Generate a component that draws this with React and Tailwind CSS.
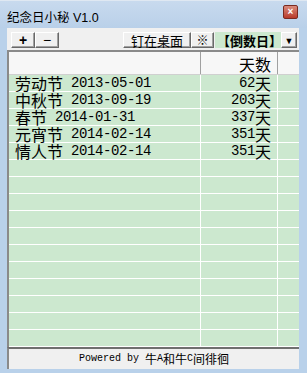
import React from "react";

const rows = [
  ["劳动节", "2013-05-01", "62"],
  ["中秋节", "2013-09-19", "203"],
  ["春节", "2014-01-31", "337"],
  ["元宵节", "2014-02-14", "351"],
  ["情人节", "2014-02-14", "351"],
];

const cjk = { fontFamily: '"Noto Sans CJK SC", sans-serif' };
const mono = { fontFamily: '"Liberation Mono", monospace' };

function Btn({ className = "", children }) {
  return (
    <div
      className={
        "flex items-center justify-center h-[16px] bg-[#f0f0f0] border-t border-l border-white border-r border-b border-r-[#696969] border-b-[#696969] shadow-[inset_-1px_-1px_0_#a0a0a0] " +
        className
      }
    >
      {children}
    </div>
  );
}

export default function App() {
  const blanks = Array.from({ length: 11 });
  return (
    <div className="w-[307px] h-[373px] bg-[#b9d1ea] flex flex-col overflow-hidden border-t border-[#dfe8f2]">
      <div className="h-[27px] flex items-center pl-[7px] pr-[9px] bg-gradient-to-b from-[#c8daee] to-[#b9d0e9]">
        <span
          className="text-[12.5px] text-black leading-[14px] mt-[6px]"
          style={{ fontFamily: '"Liberation Sans", "Noto Sans CJK SC", sans-serif' }}
        >
          纪念日小秘 V1.0
        </span>
        <div
          className="ml-auto mt-[-6px] w-[15px] h-[14px] rounded-[2px] bg-gradient-to-b from-[#d98a7c] to-[#b8392a] border border-[#7a2a20] flex items-center justify-center text-white text-[10px] font-bold leading-none"
          style={{ fontFamily: '"Liberation Sans", sans-serif' }}
        >
          ×
        </div>
      </div>
      <div className="ml-[7px] mr-[8px] h-[341px] bg-[#f0f0f0] flex flex-col">
        <div className="h-[22px] flex items-start pt-[4px] pl-[4px] pr-[2px]">
          <Btn className="w-[24px] text-[14px] font-bold leading-none">
            <span style={{ fontFamily: '"Liberation Sans", sans-serif' }}>+</span>
          </Btn>
          <Btn className="w-[24px] text-[14px] leading-none">
            <span style={{ fontFamily: '"Liberation Sans", sans-serif' }}>−</span>
          </Btn>
          <Btn className="ml-[64px] w-[68px] text-[13px] leading-none">
            <span style={cjk}>钉在桌面</span>
          </Btn>
          <Btn className="w-[23px] text-[12px] leading-none">
            <span style={cjk}>※</span>
          </Btn>
          <div className="ml-[1px] h-[16px] flex-1 flex bg-[#cce8cf] items-center">
            <span className="flex-1 text-[13px] font-bold leading-none pl-[2px]" style={cjk}>
              【倒数日】
            </span>
            <Btn className="w-[16px] text-[9px] leading-none">
              <span>▼</span>
            </Btn>
          </div>
        </div>
        <div className="h-[297px] flex flex-col border-t-2 border-l-2 border-t-[#8a8a8a] border-l-[#8a8a8a] bg-[#cce8cf] overflow-hidden">
          <div className="h-[23px] flex shrink-0 bg-[#f7f7f7] border-b border-[#d0d0d0]">
            <div className="w-[192px] border-r border-[#a0a0a0]" />
            <div
              className="w-[77px] border-r border-[#a0a0a0] flex items-end justify-end pr-[6px] pb-[1px] text-[16px] leading-[18px]"
              style={cjk}
            >
              天数
            </div>
            <div className="flex-1" />
          </div>
          {rows.map((r, i) => (
            <div key={i} className="h-[17px] shrink-0 flex border-b border-white">
              <div className="w-[192px] border-r border-white flex items-center pl-[6px] text-[16px] leading-[16px]">
                <span style={cjk}>{r[0]}</span>
                <span className="ml-[8px] text-[14px] tracking-[-0.4px]" style={mono}>
                  {r[1]}
                </span>
              </div>
              <div className="w-[77px] border-r border-white flex items-center justify-end pr-[6px] text-[16px] leading-[16px]">
                <span className="text-[14px] tracking-[-0.4px]" style={mono}>
                  {r[2]}
                </span>
                <span style={cjk}>天</span>
              </div>
              <div className="flex-1" />
            </div>
          ))}
          {blanks.map((_, i) => (
            <div key={"b" + i} className="h-[17px] shrink-0 flex border-b border-white">
              <div className="w-[192px] border-r border-white" />
              <div className="w-[77px] border-r border-white" />
              <div className="flex-1" />
            </div>
          ))}
        </div>
        <div className="h-[22px] flex items-center justify-center border-t-2 border-l-2 border-t-[#6f6f6f] border-l-[#8a8a8a] bg-[#f0f0f0] leading-[14px]">
          <span className="text-[10px]" style={mono}>Powered by </span>
          <span className="text-[12px] ml-[6px]" style={cjk}>牛</span>
          <span className="text-[10px]" style={mono}>A</span>
          <span className="text-[12px]" style={cjk}>和牛</span>
          <span className="text-[10px]" style={mono}>C</span>
          <span className="text-[12px]" style={cjk}>间徘徊</span>
        </div>
      </div>
    </div>
  );
}
